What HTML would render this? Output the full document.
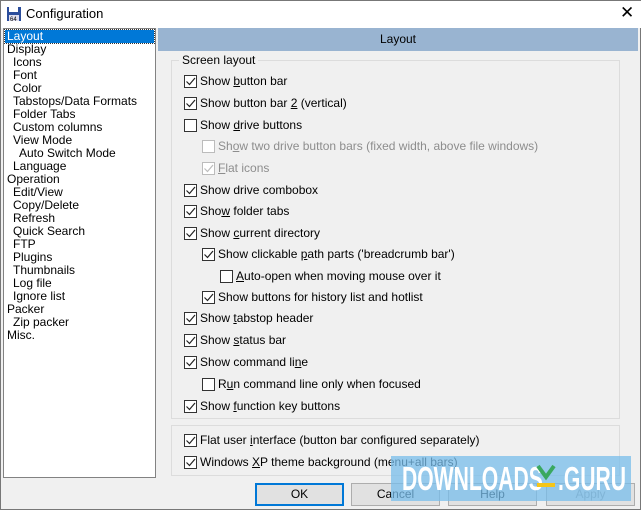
<!DOCTYPE html><html><head><style>
*{margin:0;padding:0;box-sizing:border-box}
body{width:641px;height:510px;background:#f0f0f0;font:12px "Liberation Sans",sans-serif;color:#000;position:relative;overflow:hidden;border:1px solid #777}
.a{position:absolute;white-space:nowrap}
.tree div{position:absolute;left:3px;height:13px;line-height:13px}
.cb{position:absolute;width:13px;height:13px;border:1px solid #333;background:#fff}
.cb.d{border-color:#bcbcbc}
.lbl{position:absolute;line-height:14px}
.g{color:#8d8d8d}
.btn{position:absolute;top:482px;height:23px;width:89px;border:1px solid #adadad;background:#e1e1e1;text-align:center;line-height:21px}
.wm{font:bold 33px "Liberation Sans",sans-serif;color:#fff;transform-origin:0 0}
</style></head><body>
<div class="a" style="left:0;top:0;width:641px;height:27px;background:#fff"></div>
<svg class="a" style="left:5px;top:5px" width="16" height="16"><rect x="1" y="1" width="14" height="14" fill="#2b4d9c"/><rect x="3" y="1" width="9" height="5" fill="#fff"/><rect x="3" y="9" width="10" height="6" fill="#dde"/><text x="4" y="15" font-size="6" fill="#000">64</text></svg>
<div class="a" style="left:25px;top:5px;font-size:13px">Configuration</div>
<div class="a" style="left:619px;top:2px;font-size:17px">✕</div>
<div class="a tree" style="left:2px;top:27px;width:153px;height:450px;background:#fff;border:1px solid #828282">
<div style="top:1px;left:1px;background:#0078d7;color:#fff;width:149px;padding-left:2px;outline:1px dotted #333">Layout</div>
<div style="top:14px">Display</div>
<div style="top:27px;left:9px">Icons</div>
<div style="top:40px;left:9px">Font</div>
<div style="top:53px;left:9px">Color</div>
<div style="top:66px;left:9px">Tabstops/Data Formats</div>
<div style="top:79px;left:9px">Folder Tabs</div>
<div style="top:92px;left:9px">Custom columns</div>
<div style="top:105px;left:9px">View Mode</div>
<div style="top:118px;left:15px">Auto Switch Mode</div>
<div style="top:131px;left:9px">Language</div>
<div style="top:144px">Operation</div>
<div style="top:157px;left:9px">Edit/View</div>
<div style="top:170px;left:9px">Copy/Delete</div>
<div style="top:183px;left:9px">Refresh</div>
<div style="top:196px;left:9px">Quick Search</div>
<div style="top:209px;left:9px">FTP</div>
<div style="top:222px;left:9px">Plugins</div>
<div style="top:235px;left:9px">Thumbnails</div>
<div style="top:248px;left:9px">Log file</div>
<div style="top:261px;left:9px">Ignore list</div>
<div style="top:274px">Packer</div>
<div style="top:287px;left:9px">Zip packer</div>
<div style="top:300px">Misc.</div>
</div>
<div class="a" style="left:157px;top:27px;width:480px;height:23px;background:#99b4d1;text-align:center;line-height:23px">Layout</div>
<div class="a" style="left:170px;top:59px;width:449px;height:359px;border:1px solid #dcdcdc"></div>
<div class="a" style="left:178px;top:52px;background:#f0f0f0;padding:0 3px">Screen layout</div>
<div class="a" style="left:170px;top:424px;width:449px;height:51px;border:1px solid #dcdcdc"></div>
<div id="rows"></div>
<script>
var r=[[81,183,1,0,"Show <u>b</u>utton bar"],[103,183,1,0,"Show button bar <u>2</u> (vertical)"],[125,183,0,0,"Show <u>d</u>rive buttons"],[146,201,0,1,"Sh<u>o</u>w two drive button bars (fixed width, above file windows)"],[168,201,1,1,"<u>F</u>lat icons"],[190,183,1,0,"Show drive combobox"],[211,183,1,0,"Sho<u>w</u> folder tabs"],[233,183,1,0,"Show <u>c</u>urrent directory"],[254,201,1,0,"Show clickable <u>p</u>ath parts ('breadcrumb bar')"],[276,219,0,0,"<u>A</u>uto-open when moving mouse over it"],[297,201,1,0,"Show buttons for history list and hotlist"],[318,183,1,0,"Show <u>t</u>abstop header"],[340,183,1,0,"Show <u>s</u>tatus bar"],[362,183,1,0,"Show command li<u>n</u>e"],[384,201,0,0,"R<u>u</u>n command line only when focused"],[406,183,1,0,"Show <u>f</u>unction key buttons"],[440,183,1,0,"Flat user <u>i</u>nterface (button bar configured separately)"],[462,183,1,0,"Windows <u>X</u>P theme background (menu+all bars)"]];
var h="";r.forEach(function(x){var c=x[3]?"#bcbcbc":"#222";h+='<div class="cb'+(x[3]?' d':'')+'" style="left:'+x[1]+'px;top:'+(x[0]-7)+'px">'+(x[2]?'<svg width="11" height="11" style="position:absolute;left:0;top:0"><path d="M1.5 5.5 L4.5 8.5 L10 2" fill="none" stroke="'+c+'" stroke-width="1.2"/></svg>':'')+'</div><div class="lbl'+(x[3]?' g':'')+'" style="left:'+(x[1]+16)+'px;top:'+(x[0]-8)+'px">'+x[4]+'</div>'});
document.getElementById("rows").innerHTML=h;
</script>
<div class="btn" style="left:254px;border:2px solid #0078d7;line-height:19px">OK</div>
<div class="btn" style="left:350px">Cancel</div>
<div class="btn" style="left:447px">Help</div>
<div class="btn" style="left:545px;color:#999">Apply</div>
<div class="a" style="left:390px;top:455px;width:240px;height:45px;background:rgba(120,190,235,.75)"></div>
<div class="a wm" style="left:401px;top:459px;transform:scaleX(0.64)">DOWNLOADS</div>
<svg class="a" style="left:533px;top:462px" width="24" height="30"><path d="M4 3 L12 14 L20 3" fill="none" stroke="#3aa860" stroke-width="4"/><rect x="3" y="20" width="18" height="4" fill="#f5c518"/></svg>
<div class="a wm" style="left:557px;top:459px;transform:scaleX(0.64)">.GURU</div>
</body></html>
